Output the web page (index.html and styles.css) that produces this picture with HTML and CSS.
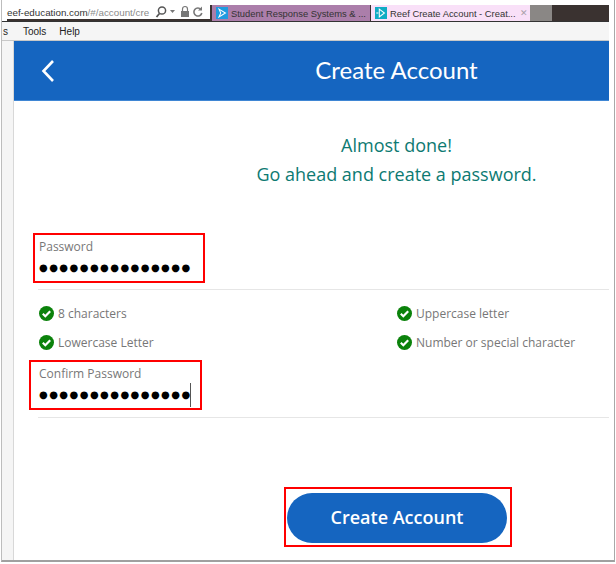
FILE: index.html
```html
<!DOCTYPE html>
<html lang="en">
<head>
<meta charset="utf-8">
<title>Reef Create Account</title>
<link rel="stylesheet" href="styles.css">
</head>
<body>
<div class="shot">
  <div class="chrome">
    <div class="address">
      <span class="url"><b>eef-education.com</b>/#/account/cre</span>
      <svg class="addr-icons" width="52" height="14" viewBox="0 0 52 14"><circle cx="7" cy="5.500" r="3.600" fill="none" stroke="#555" stroke-width="1.500"/><path d="M4.500 8.500 1.500 12" stroke="#555" stroke-width="1.800"/><path d="M15 5h5l-2.500 3z" fill="#777"/><rect x="26" y="6" width="8" height="6" fill="#777"/><path d="M27.500 6V4a2.500 2.500 0 0 1 5 0v2" fill="none" stroke="#777" stroke-width="1.200"/><path d="M46 4.500a4 4 0 1 0 .8 3.500" fill="none" stroke="#777" stroke-width="1.600"/><path d="M47 1.500v4h-4z" fill="#777"/></svg>
    </div>
    <div class="tab tab-inactive">
      <svg class="favicon" width="12" height="12" viewBox="0 0 14 14"><rect width="14" height="14" fill="#1e9be0"/><path d="M3.500 2.500 11 7l-7.500 4.500 2-4.500z" fill="none" stroke="#fff" stroke-width="1.200"/></svg>
      <span>Student Response Systems &amp; ...</span>
    </div>
    <div class="tab tab-active">
      <svg class="favicon" width="12" height="12" viewBox="0 0 14 14"><rect width="14" height="14" fill="#10acc4"/><path d="M5 2.500 11 7l-6 4.500z" fill="none" stroke="#fff" stroke-width="1.200"/><path d="M1.500 7H4" stroke="#fff" stroke-width="1.200"/></svg>
      <span>Reef Create Account - Creat...</span>
      <span class="close">✕</span>
    </div>
    <div class="tab-new"></div>
    <div class="chrome-dark"></div>
  </div>
  <div class="menubar"><span class="menu-cut">s</span><span>Tools</span><span>Help</span></div>
  <div class="content">
    <div class="gutter"></div>
    <main class="page">
      <header class="appbar">
        <svg class="back" width="14" height="24" viewBox="0 0 14 24"><path d="M12 2 2.500 12 12 22" fill="none" stroke="#fff" stroke-width="2.600"/></svg>
        <h1>Create Account</h1>
      </header>
      <div class="intro">
        <p>Almost done!</p>
        <p>Go ahead and create a password.</p>
      </div>
      <section class="form">
        <div class="field">
          <label>Password</label>
          <div class="dots">●●●●●●●●●●●●●●●</div>
        </div>
        <div class="rules">
          <div class="rule"><svg class="ok" viewBox="0 0 15 15"><circle cx="7.500" cy="7.500" r="7.500" fill="#0b820b"/><path d="M3.800 7.800 6.300 10.200 11.200 5.200" fill="none" stroke="#fff" stroke-width="2.200"/></svg>8 characters</div>
          <div class="rule"><svg class="ok" viewBox="0 0 15 15"><circle cx="7.500" cy="7.500" r="7.500" fill="#0b820b"/><path d="M3.800 7.800 6.300 10.200 11.200 5.200" fill="none" stroke="#fff" stroke-width="2.200"/></svg>Uppercase letter</div>
          <div class="rule"><svg class="ok" viewBox="0 0 15 15"><circle cx="7.500" cy="7.500" r="7.500" fill="#0b820b"/><path d="M3.800 7.800 6.300 10.200 11.200 5.200" fill="none" stroke="#fff" stroke-width="2.200"/></svg>Lowercase Letter</div>
          <div class="rule"><svg class="ok" viewBox="0 0 15 15"><circle cx="7.500" cy="7.500" r="7.500" fill="#0b820b"/><path d="M3.800 7.800 6.300 10.200 11.200 5.200" fill="none" stroke="#fff" stroke-width="2.200"/></svg>Number or special character</div>
        </div>
        <div class="field field-confirm">
          <label>Confirm Password</label>
          <div class="dots dots-confirm">●●●●●●●●●●●●●●●<i class="caret"></i></div>
        </div>
      </section>
      <div class="actions"><button class="submit" type="button">Create Account</button></div>
      <div class="mark mark-pass"></div>
      <div class="mark mark-confirm"></div>
      <div class="mark mark-submit"></div>
    </main>
  </div>
</div>
</body>
</html>
```
FILE: styles.css
```css
* { box-sizing: border-box; }
html, body { margin: 0; padding: 0; background: #fff; }
body { width: 616px; height: 564px; overflow: hidden; font-family: "Open Sans", sans-serif; }
.shot {
  width: 614px; height: 562px; margin-left: 1px; padding-right: 5px;
  border-left: 1px solid #bdbdbd; border-right: 1px solid #a8a8a8; border-bottom: 2px solid #a0a0a0;
  overflow: hidden; display: flex; flex-direction: column;
}
.chrome { height: 22px; padding-top: 5px; display: flex; background: #fff; border-bottom: 1px solid #333; flex: none; }
.address {
  width: 205px; margin-left: 5px; display: flex; align-items: center; justify-content: space-between;
  font: 9.800px "Liberation Sans", sans-serif; color: #8a8a8a; white-space: nowrap; padding-right: 3px;
  border-right: 2px solid #3a3230; border-bottom: 2px solid #3a3230;
}
.url b { font-weight: 400; color: #333; }
.addr-icons { flex: none; }
.tab { display: flex; align-items: center; gap: 3px; font: 9.400px "Liberation Sans", sans-serif; color: #333; white-space: nowrap; }
.tab-inactive { width: 159px; background: #ab7eaa; padding-left: 4px; border-right: 1px solid #3a3230; }
.tab-active { width: 159px; background: #f9e0f8; padding-left: 4px; }
.close { color: #a9a0a8; font-size: 9px; margin-left: 1px; }
.favicon { flex: none; }
.tab-new { width: 22px; background: #8a8785; }
.chrome-dark { flex: 1; background: #3a3230; }
.menubar { height: 19px; flex: none; background: #f5f5f5; border-bottom: 1px solid #c8c8c8; display: flex; align-items: center; gap: 13px; padding-left: 1px; font: 10px "Liberation Sans", sans-serif; color: #222; }
.menu-cut { width: 5px; margin-right: 2px; text-align: right; }
.content { flex: 1; display: flex; min-height: 0; }
.gutter { width: 12px; background: #f5f5f5; border-right: 1px solid #d8d8d8; flex: none; }
.page { flex: 1; position: relative; background: #fff; display: flex; flex-direction: column; }
.appbar { height: 60px; background: #1565c0; border-bottom: 1px solid #3f86d4; display: flex; align-items: center; padding-left: 27px; flex: none; }
.back { flex: none; }
.appbar h1 { flex: 1; margin: 0 0 3px; padding-left: 129px; text-align: center; color: #fff; font: 400 24px "Lato", sans-serif; }
.intro { margin-top: 30px; text-align: center; color: #0d7a72; font-size: 18px; line-height: 29px; padding-left: 170px; height: 63px; flex: none; }
.intro p { margin: 0; }
.form { margin-top: 42px; padding-left: 24px; flex: none; }
.field { height: 54px; padding-left: 1px; border-bottom: 1px solid #e6e6e6; }
.field-confirm { height: 55px; }
.field label { display: block; font-size: 12px; line-height: 16px; color: #777; padding-top: 3px; height: 19px; }
.dots { font: 10px/22px "DejaVu Sans", sans-serif; color: #000; letter-spacing: 1.450px; margin-top: 2px; white-space: nowrap; }
.dots-confirm { margin-top: 1px; }
.caret { display: inline-block; width: 1px; height: 24px; background: #555; vertical-align: middle; margin-left: -2px; }
.rules { display: grid; grid-template-columns: 358px 1fr; grid-auto-rows: 29px; padding: 9px 0 0 1px; height: 73px; }
.rule { display: flex; align-items: center; gap: 4px; font-size: 12px; color: #777; }
.ok { width: 15px; height: 15px; flex: none; }
.actions { margin-top: 75px; padding-left: 273px; flex: none; }
.submit { width: 220px; height: 50px; border: 0; border-radius: 25px; padding: 0 0 2px; background: #1565c0; color: #fff; font: 600 18px "Open Sans", sans-serif; }
.mark { position: absolute; border: 2px solid #f00; }
.mark-pass { left: 19px; top: 192px; width: 172px; height: 50px; }
.mark-confirm { left: 15px; top: 319px; width: 173px; height: 50px; }
.mark-submit { left: 270px; top: 446px; width: 228px; height: 60px; }
```
